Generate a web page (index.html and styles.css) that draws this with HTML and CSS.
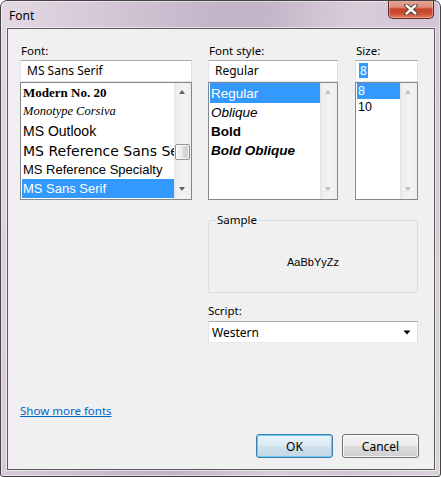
FILE: index.html
```html
<!DOCTYPE html>
<html>
<head>
<meta charset="utf-8">
<title>Font</title>
<link rel="stylesheet" href="styles.css">
</head>
<body>
<div class="window">
  <div class="titlebar">
    <span class="title">Font</span>
    <div class="close">
      <svg width="14" height="11" viewBox="0 0 14 11">
        <path d="M2.5 1.5 L11.5 9.5 M11.5 1.5 L2.5 9.5" stroke="#3b2a2a" stroke-width="4.2" stroke-linecap="round" fill="none"/>
        <path d="M2.5 1.5 L11.5 9.5 M11.5 1.5 L2.5 9.5" stroke="#ffffff" stroke-width="2.4" stroke-linecap="round" fill="none"/>
      </svg>
    </div>
  </div>
  <div class="client">
    <div class="pickers">
      <div class="picker picker-font">
        <div class="lbl">Font:</div>
        <div class="textbox">MS Sans Serif</div>
        <div class="listbox">
          <ul class="items">
            <li class="it f-modern">Modern No. 20</li>
            <li class="it f-corsiva">Monotype Corsiva</li>
            <li class="it f-outlook">MS Outlook</li>
            <li class="it f-refsans">MS Reference Sans Serif</li>
            <li class="it f-refspec">MS Reference Specialty</li>
            <li class="it f-mssans sel">MS Sans Serif</li>
          </ul>
          <div class="scrollbar">
            <div class="arrow up"></div>
            <div class="track"><div class="thumb"></div></div>
            <div class="arrow down"></div>
          </div>
        </div>
      </div>
      <div class="picker picker-style">
        <div class="lbl">Font style:</div>
        <div class="textbox">Regular</div>
        <div class="listbox">
          <ul class="items">
            <li class="it s-item sel">Regular</li>
            <li class="it s-item s-oblique">Oblique</li>
            <li class="it s-item s-bold">Bold</li>
            <li class="it s-item s-boldoblique">Bold Oblique</li>
          </ul>
          <div class="scrollbar disabled">
            <div class="arrow up"></div>
            <div class="track"></div>
            <div class="arrow down"></div>
          </div>
        </div>
      </div>
      <div class="picker picker-size">
        <div class="lbl">Size:</div>
        <div class="textbox"><span class="textsel">8</span></div>
        <div class="listbox">
          <ul class="items">
            <li class="it z-item sel">8</li>
            <li class="it z-item">10</li>
          </ul>
          <div class="scrollbar disabled">
            <div class="arrow up"></div>
            <div class="track"></div>
            <div class="arrow down"></div>
          </div>
        </div>
      </div>
    </div>

    <div class="lower">
      <fieldset class="sample">
        <legend>Sample</legend>
        <div class="sample-text">AaBbYyZz</div>
      </fieldset>
      <div class="lbl script-lbl">Script:</div>
      <div class="combo">
        <span>Western</span>
        <svg class="combo-arrow" width="8" height="5" viewBox="0 0 8 5"><path d="M0.5 0.5 H7.5 L4 4.5 Z" fill="#000"/></svg>
      </div>
    </div>

    <a class="more" href="#">Show more fonts</a>

    <div class="buttons">
      <button class="btn btn-default">OK</button>
      <button class="btn">Cancel</button>
    </div>
  </div>
</div>
</body>
</html>
```

FILE: styles.css
```css
* { box-sizing: border-box; }

html, body {
  margin: 0;
  padding: 0;
  background: #ffffff;
}

body {
  font-family: "Noto Sans", "Open Sans", sans-serif;
  font-size: 11.5px;
  color: #000;
}

.window {
  width: 441px;
  height: 477px;
  border: 1px solid #454545;
  border-radius: 7px 7px 3px 3px;
  background:
    linear-gradient(100deg, #e3d9e4 0%, #d6c9d8 18%, #c5b5c9 40%, #c3b3c7 50%, #d9cdda 68%, #d2c4d4 82%, #dcd1dd 100%);
  box-shadow: inset 0 0 0 1px rgba(255, 255, 255, 0.45);
  display: flex;
  flex-direction: column;
  overflow: hidden;
}

.titlebar {
  height: 27px;
  flex: none;
  display: flex;
  justify-content: space-between;
  align-items: flex-start;
  padding-left: 8px;
  padding-right: 6px;
}

.title {
  font-size: 12px;
  line-height: 16px;
  padding-top: 7px;
  color: #000;
}

.close {
  width: 46px;
  height: 19px;
  margin-top: -1px;
  border: 1px solid #5c2a24;
  border-top: none;
  border-radius: 0 0 5px 5px;
  background: linear-gradient(to bottom, #e9ab9b 0%, #dc8c78 40%, #c4462c 50%, #c8482e 70%, #e07a5d 100%);
  box-shadow: inset 0 0 0 1px rgba(255, 210, 200, 0.45);
  display: flex;
  align-items: center;
  justify-content: center;
}

.close svg { display: block; margin-top: 1px; }

.client {
  flex: none;
  width: 428px;
  height: 442px;
  margin-left: 6px;
  border: 1px solid #5b5b5b;
  background: #f0f0f0;
  box-shadow: 0 0 0 1px rgba(255, 255, 255, 0.55);
  padding: 0 15px 0 12px;
  display: flex;
  flex-direction: column;
}

.pickers {
  display: flex;
  padding-top: 14px;
}

.picker { display: flex; flex-direction: column; }
.picker-font { width: 172px; }
.picker-style { width: 130px; margin-left: 16px; }
.picker-size { width: 63px; margin-left: 17px; }

.lbl {
  line-height: 16px;
  height: 16px;
  padding-left: 1px;
  margin-bottom: 1px;
}

.textbox {
  height: 22px;
  background: #fff;
  border: 1px solid;
  border-color: #abadb3 #dbdfe6 #e3e9ef #e2e3ea;
  padding-left: 6px;
  line-height: 20px;
  font-size: 12px;
  white-space: nowrap;
}

.picker-size .textbox { padding-left: 3px; }

.textsel {
  display: inline-block;
  background: #3399ff;
  color: #fff;
  line-height: 15px;
  padding: 0 1px;
}

.listbox {
  height: 118px;
  background: #fff;
  border: 1px solid #828790;
  display: flex;
}

.items {
  list-style: none;
  margin: 0;
  padding: 0 0 0 1px;
  flex: 1;
  min-width: 0;
  overflow: hidden;
}

.it {
  height: 19px;
  white-space: nowrap;
  overflow: hidden;
  padding-left: 1px;
  display: flex;
  align-items: center;
}

.it.sel {
  background: #3399ff;
  color: #fff;
}

.f-modern {
  font-family: "Liberation Serif", serif;
  font-weight: bold;
  font-size: 13px;
}
.f-corsiva {
  font-family: "Liberation Serif", serif;
  font-style: italic;
  font-size: 12.5px;
}
.f-outlook {
  font-family: "Liberation Sans", sans-serif;
  font-size: 14px;
  height: 20px;
}
.f-refsans {
  font-family: "DejaVu Sans", sans-serif;
  font-size: 14px;
}
.f-refspec {
  font-family: "Liberation Sans", sans-serif;
  font-size: 13px;
}
.f-mssans {
  font-family: "Liberation Sans", sans-serif;
  font-size: 13px;
}

.s-item {
  font-family: "Liberation Sans", sans-serif;
  font-size: 13.5px;
}
.s-item.sel { height: 20px; }
.s-oblique { font-style: italic; }
.s-bold { font-weight: bold; }
.s-boldoblique { font-weight: bold; font-style: italic; }

.z-item {
  font-family: "Liberation Sans", sans-serif;
  font-size: 12.5px;
  height: 16px;
}

.scrollbar {
  width: 17px;
  flex: none;
  display: flex;
  flex-direction: column;
  background: linear-gradient(to right, #e3e3e3 0px, #eeeeee 2px, #f3f3f3 60%, #eeeeee 100%);
}

.arrow {
  height: 17px;
  flex: none;
  position: relative;
}

.arrow::after {
  content: "";
  position: absolute;
  left: 5px;
  width: 0;
  height: 0;
  border-left: 3.5px solid transparent;
  border-right: 3.5px solid transparent;
}

.arrow.up::after {
  top: 7px;
  border-bottom: 4px solid #606060;
}

.arrow.down::after {
  top: 5px;
  border-top: 4px solid #606060;
}

.scrollbar.disabled .arrow.up::after { border-bottom-color: #bfbfbf; }
.scrollbar.disabled .arrow.down::after { border-top-color: #bfbfbf; }

.track { flex: 1; }

.thumb {
  margin-top: 44px;
  margin-left: 1px;
  width: 15px;
  height: 16px;
  border: 1px solid #959595;
  border-radius: 2px;
  background: linear-gradient(to right, #f5f5f5 0%, #ececec 45%, #d9d9d9 55%, #cfcfcf 100%);
  box-shadow: inset 0 0 0 1px rgba(255, 255, 255, 0.7);
}

.lower {
  margin-left: 188px;
  width: 210px;
  display: flex;
  flex-direction: column;
}

.sample {
  margin: 12px 0 0 0;
  padding: 0;
  height: 81px;
  border: 1px solid #d5dfe5;
  border-radius: 3px;
  min-width: 0;
}

.sample legend {
  margin-left: 7px;
  padding: 0 1px;
  line-height: 16px;
  font-size: 11.5px;
}

.sample-text {
  text-align: center;
  font-family: "Liberation Sans", sans-serif;
  font-size: 11px;
  line-height: 14px;
  padding-top: 27px;
}

.script-lbl {
  margin-top: 10px;
  margin-bottom: 2px;
  padding-left: 0;
}

.combo {
  height: 22px;
  background: #fff;
  border: 1px solid;
  border-color: #abadb3 #dbdfe6 #e3e9ef #e2e3ea;
  display: flex;
  align-items: center;
  justify-content: space-between;
  padding: 0 6px 0 3px;
  font-size: 12px;
}

.combo-arrow { display: block; margin-top: 1px; }

.more {
  align-self: flex-start;
  margin-top: 60px;
  line-height: 16px;
  color: #0066cc;
  text-decoration: underline;
}

.buttons {
  display: flex;
  justify-content: flex-end;
  gap: 9px;
  margin-top: 15px;
}

.btn {
  width: 77px;
  height: 24px;
  font-family: inherit;
  font-size: 12px;
  color: #000;
  border: 1px solid #707070;
  border-radius: 3px;
  padding: 0;
  background: linear-gradient(to bottom, #f2f2f2 0%, #ebebeb 50%, #dddddd 51%, #cfcfcf 100%);
  box-shadow: inset 0 0 0 1px rgba(255, 255, 255, 0.8);
}

.btn-default {
  border-color: #3c7fb1;
  background: linear-gradient(to bottom, #eaf4fa 0%, #dceaf3 50%, #cfe1ec 51%, #c3d8e5 100%);
  box-shadow: inset 0 0 0 1px #6fc8f1;
}
```
